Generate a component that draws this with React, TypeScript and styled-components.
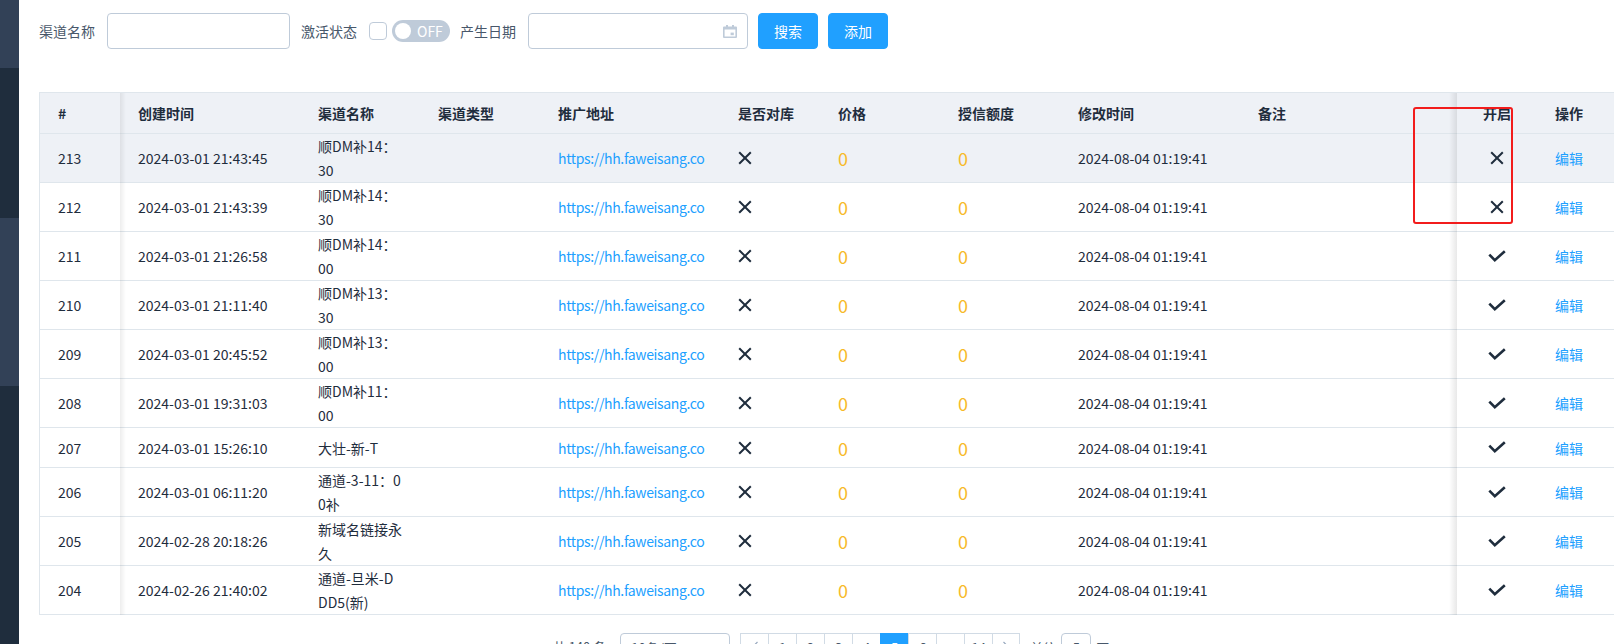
import React from 'react';
import styled, { createGlobalStyle } from 'styled-components';

const GlobalStyle = createGlobalStyle`
  html, body { margin: 0; padding: 0; background: #fff; }
  body {
    font-family: "Noto Sans CJK SC", "Noto Sans", sans-serif;
    color: #1f2d3d;
    font-size: 14px;
    overflow: hidden;
  }
  * { box-sizing: border-box; }
`;

const COLS = '80px 180px 120px 120px 180px 100px 120px 120px 180px 217px 80px 80px';

const Layout = styled.div`
  display: flex;
  width: 1614px;
  height: 644px;
  overflow: hidden;
`;

const Sidebar = styled.aside`
  width: 19px;
  flex: none;
  display: flex;
  flex-direction: column;
  background: #1f2d3d;
`;

const SideBlock = styled.div<{ $h: number; $light?: boolean }>`
  height: ${(p) => p.$h}px;
  flex: none;
  background: ${(p) => (p.$light ? '#324157' : '#1f2d3d')};
`;

const Main = styled.main`
  flex: 1;
  min-width: 0;
  display: flex;
  flex-direction: column;
  padding: 13px 0 0 20px;
  overflow: hidden;
`;

const FilterBar = styled.form`
  display: flex;
  align-items: center;
  height: 36px;
`;

const Label = styled.label<{ $gap?: number }>`
  font-size: 14px;
  color: #48576a;
  margin-right: ${(p) => p.$gap ?? 12}px;
  white-space: nowrap;
`;

const TextInput = styled.div<{ $w: number; $gap?: number }>`
  width: ${(p) => p.$w}px;
  height: 36px;
  border: 1px solid #bfcbd9;
  border-radius: 4px;
  background: #fff;
  margin-right: ${(p) => p.$gap ?? 11}px;
  display: flex;
  align-items: center;
  justify-content: flex-end;
  padding-right: 10px;
`;

const CheckBox = styled.span`
  width: 18px;
  height: 18px;
  border: 1px solid #bfcbd9;
  border-radius: 4px;
  background: #fff;
  margin-right: 5px;
`;

const Switch = styled.span`
  width: 58px;
  height: 22px;
  border-radius: 11px;
  background: #bfcbd9;
  display: flex;
  align-items: center;
  padding-left: 3px;
  margin-right: 10px;
  color: #fff;
  font-size: 14px;
`;

const SwitchKnob = styled.span`
  width: 16px;
  height: 16px;
  border-radius: 50%;
  background: #fff;
  margin-right: 6px;
`;

const Button = styled.button<{ $gap?: number }>`
  height: 36px;
  width: 60px;
  border: 1px solid #20a0ff;
  border-radius: 4px;
  background: #20a0ff;
  color: #fff;
  font-family: inherit;
  font-size: 14px;
  padding: 0;
  margin-right: ${(p) => p.$gap ?? 10}px;
`;

const TableWrap = styled.div`
  position: relative;
  width: 1579px;
  flex: none;
  margin-top: 43px;
  border: 1px solid #dfe6ec;
  border-bottom: 0;
`;

const Row = styled.div<{ $head?: boolean; $hover?: boolean }>`
  display: grid;
  grid-template-columns: ${COLS};
  border-bottom: 1px solid #dfe6ec;
  background: ${(p) => (p.$head || p.$hover ? '#eef1f6' : '#fff')};
`;

const Cell = styled.div<{ $head?: boolean; $center?: boolean; $fixed?: 'left' | 'right' }>`
  min-height: ${(p) => (p.$head ? 40 : 39)}px;
  padding: 0 18px;
  display: flex;
  align-items: center;
  justify-content: ${(p) => (p.$center ? 'center' : 'flex-start')};
  font-size: 14px;
  line-height: 24px;
  font-weight: ${(p) => (p.$head ? 700 : 400)};
  color: #1f2d3d;
  min-width: 0;
  position: ${(p) => (p.$fixed ? 'relative' : 'static')};

  ${(p) =>
    p.$fixed === 'left' &&
    `&::after {
      content: '';
      position: absolute;
      top: 0;
      bottom: -1px;
      right: -6px;
      width: 6px;
      background: linear-gradient(to right, rgba(0,0,0,0.07), rgba(0,0,0,0));
      z-index: 1;
    }`}

  ${(p) =>
    p.$fixed === 'right' &&
    `&::before {
      content: '';
      position: absolute;
      top: 0;
      bottom: -1px;
      left: -8px;
      width: 8px;
      background: linear-gradient(to left, rgba(0,0,0,0.09), rgba(0,0,0,0));
      z-index: 1;
    }`}
`;

const NameLines = styled.div`
  display: flex;
  flex-direction: column;
`;

const UrlLink = styled.a`
  display: block;
  white-space: nowrap;
  color: #20a0ff;
  text-decoration: none;
  font-size: 14px;
  letter-spacing: -0.35px;
`;

const Amount = styled.span`
  color: #f7ba2a;
  font-size: 18px;
  line-height: 24px;
`;

const EditLink = styled.a`
  color: #20a0ff;
  text-decoration: none;
  font-size: 14px;
`;

const Annotation = styled.div`
  position: absolute;
  left: 1373px;
  top: 14px;
  width: 100px;
  height: 117px;
  border: 2px solid #f21c1c;
  border-radius: 3px;
  z-index: 2;
  pointer-events: none;
`;

const PaginationBar = styled.div`
  width: 1579px;
  flex: none;
  margin-top: 18px;
  padding-left: 5px;
  display: flex;
  justify-content: center;
  align-items: center;
  font-size: 13px;
  color: #48576a;
  white-space: nowrap;
`;

const Total = styled.span`
  margin-right: 14px;
  line-height: 28px;
`;

const SizeSelect = styled.span`
  width: 110px;
  height: 28px;
  border: 1px solid #bfcbd9;
  border-radius: 4px;
  display: flex;
  align-items: center;
  justify-content: space-between;
  padding: 0 10px;
  margin-right: 10px;
`;

const Pager = styled.ul`
  display: flex;
  list-style: none;
  margin: 0;
  padding: 0;
`;

const PageItem = styled.li<{ $active?: boolean; $last?: boolean }>`
  width: 28px;
  height: 28px;
  display: flex;
  align-items: center;
  justify-content: center;
  border: 1px solid ${(p) => (p.$active ? '#20a0ff' : '#d1dbe5')};
  border-right-width: ${(p) => (p.$last ? 1 : 0)}px;
  background: ${(p) => (p.$active ? '#20a0ff' : '#fff')};
  color: ${(p) => (p.$active ? '#fff' : '#48576a')};
  font-size: 13px;
`;

const Jumper = styled.span`
  display: flex;
  align-items: center;
  margin-left: 10px;
  gap: 5px;
`;

const JumpInput = styled.span`
  width: 30px;
  height: 28px;
  border: 1px solid #bfcbd9;
  border-radius: 4px;
  display: flex;
  align-items: center;
  justify-content: center;
`;

const CrossIcon = () => (
  <svg width="14" height="14" viewBox="0 0 14 14" aria-hidden>
    <path d="M1.2 1.2 L12.8 12.8 M12.8 1.2 L1.2 12.8" stroke="#1f2d3d" strokeWidth="2" fill="none" />
  </svg>
);

const CheckIcon = () => (
  <svg width="18" height="13" viewBox="0 0 18 13" aria-hidden>
    <polyline points="1.3,4.6 6.8,10.2 16.8,1.2" stroke="#1f2d3d" strokeWidth="2.6" fill="none" />
  </svg>
);

const CalendarIcon = () => (
  <svg width="14" height="13" viewBox="0 0 14 13" aria-hidden>
    <path
      fillRule="evenodd"
      fill="#bfcbd9"
      d="M3 0h2v1.5h4V0h2v1.5h2a1 1 0 0 1 1 1V12a1 1 0 0 1-1 1H1a1 1 0 0 1-1-1V2.5a1 1 0 0 1 1-1h2z M1.6 4.5v7h10.8v-7z"
    />
    <rect x="7.6" y="7.6" width="3.2" height="2.6" fill="#bfcbd9" />
  </svg>
);

const Chevron = ({ dir }: { dir: 'left' | 'right' }) => (
  <svg width="8" height="12" viewBox="0 0 8 12" aria-hidden>
    <polyline
      points={dir === 'left' ? '6.5,1 1.5,6 6.5,11' : '1.5,1 6.5,6 1.5,11'}
      stroke="#97a8be"
      strokeWidth="1.2"
      fill="none"
    />
  </svg>
);

const Caret = () => (
  <svg width="10" height="6" viewBox="0 0 10 6" aria-hidden>
    <path d="M0 0h10L5 6z" fill="#bfcbd9" />
  </svg>
);

type Item = {
  id: number;
  created: string;
  name: string[];
  open: boolean;
};

const rows: Item[] = [
  { id: 213, created: '2024-03-01 21:43:45', name: ['顺DM补14：', '30'], open: false },
  { id: 212, created: '2024-03-01 21:43:39', name: ['顺DM补14：', '30'], open: false },
  { id: 211, created: '2024-03-01 21:26:58', name: ['顺DM补14：', '00'], open: true },
  { id: 210, created: '2024-03-01 21:11:40', name: ['顺DM补13：', '30'], open: true },
  { id: 209, created: '2024-03-01 20:45:52', name: ['顺DM补13：', '00'], open: true },
  { id: 208, created: '2024-03-01 19:31:03', name: ['顺DM补11：', '00'], open: true },
  { id: 207, created: '2024-03-01 15:26:10', name: ['大壮-新-T'], open: true },
  { id: 206, created: '2024-03-01 06:11:20', name: ['通道-3-11：0', '0补'], open: true },
  { id: 205, created: '2024-02-28 20:18:26', name: ['新域名链接永', '久'], open: true },
  { id: 204, created: '2024-02-26 21:40:02', name: ['通道-旦米-D', 'DD5(新)'], open: true },
];

const headers = ['#', '创建时间', '渠道名称', '渠道类型', '推广地址', '是否对库', '价格', '授信额度', '修改时间', '备注'];

const pages: { label: React.ReactNode; active?: boolean }[] = [
  { label: <Chevron dir="left" /> },
  { label: '1' },
  { label: '2' },
  { label: '3' },
  { label: '4' },
  { label: '5', active: true },
  { label: '6' },
  { label: '…' },
  { label: '14' },
  { label: <Chevron dir="right" /> },
];

export default function App() {
  return (
    <>
      <GlobalStyle />
      <Layout>
        <Sidebar>
          <SideBlock $h={68} $light />
          <SideBlock $h={150} />
          <SideBlock $h={168} $light />
        </Sidebar>
        <Main>
          <FilterBar onSubmit={(e) => e.preventDefault()}>
            <Label>渠道名称</Label>
            <TextInput $w={183} />
            <Label>激活状态</Label>
            <CheckBox />
            <Switch>
              <SwitchKnob />
              OFF
            </Switch>
            <Label>产生日期</Label>
            <TextInput $w={220} $gap={10}>
              <CalendarIcon />
            </TextInput>
            <Button type="button">搜索</Button>
            <Button type="button">添加</Button>
          </FilterBar>

          <TableWrap>
            <Row $head>
              {headers.map((h, i) => (
                <Cell key={h} $head $fixed={i === 0 ? 'left' : undefined}>
                  {h}
                </Cell>
              ))}
              <Cell $head $center $fixed="right">开启</Cell>
              <Cell $head>操作</Cell>
            </Row>
            {rows.map((r, idx) => (
              <Row key={r.id} $hover={idx === 0}>
                <Cell $fixed="left">{r.id}</Cell>
                <Cell>{r.created}</Cell>
                <Cell>
                  <NameLines>
                    {r.name.map((l, i) => (
                      <span key={i}>{l}</span>
                    ))}
                  </NameLines>
                </Cell>
                <Cell />
                <Cell>
                  <UrlLink>https://hh.faweisang.co</UrlLink>
                </Cell>
                <Cell>
                  <CrossIcon />
                </Cell>
                <Cell>
                  <Amount>0</Amount>
                </Cell>
                <Cell>
                  <Amount>0</Amount>
                </Cell>
                <Cell>2024-08-04 01:19:41</Cell>
                <Cell />
                <Cell $center $fixed="right">
                  {r.open ? <CheckIcon /> : <CrossIcon />}
                </Cell>
                <Cell>
                  <EditLink>编辑</EditLink>
                </Cell>
              </Row>
            ))}
            <Annotation />
          </TableWrap>

          <PaginationBar>
            <Total>共 140 条</Total>
            <SizeSelect>
              <span>10条/页</span>
              <Caret />
            </SizeSelect>
            <Pager>
              {pages.map((p, i) => (
                <PageItem key={i} $active={p.active} $last={i === pages.length - 1}>
                  {p.label}
                </PageItem>
              ))}
            </Pager>
            <Jumper>
              前往
              <JumpInput>5</JumpInput>
              页
            </Jumper>
          </PaginationBar>
        </Main>
      </Layout>
    </>
  );
}
